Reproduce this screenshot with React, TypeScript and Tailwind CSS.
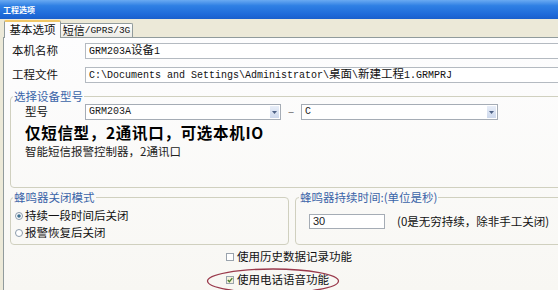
import React from 'react';

const mono = "font-['Liberation_Mono','Noto_Sans_CJK_SC',monospace]";

function Combo({ value, width }: { value: string; width: string }) {
  return (
    <div className={`${width} h-[16px] border border-[#a5acb5] bg-white flex items-stretch`}>
      <span className={`flex-1 pl-[3px] text-[10px] leading-[14px] ${mono} text-[#222]`}>{value}</span>
      <span className="w-[9px] my-[1px] mr-[1px] bg-[linear-gradient(180deg,#e8eef8,#cdd8ec)] flex items-center justify-center">
        <svg width="5" height="3" viewBox="0 0 5 3">
          <path d="M0 0h5L2.5 3z" fill="#4d6185" />
        </svg>
      </span>
    </div>
  );
}

function Radio({ checked }: { checked?: boolean }) {
  return (
    <svg width="8" height="8" viewBox="0 0 8 8" className="shrink-0">
      <circle cx="4" cy="4" r="3.5" fill="#fff" stroke="#8a9aab" />
      {checked && <circle cx="4" cy="4" r="1.8" fill="#3c6f8f" />}
    </svg>
  );
}

function Check({ checked }: { checked?: boolean }) {
  return (
    <svg width="8" height="8" viewBox="0 0 8 8" className="shrink-0">
      <rect x="0.5" y="0.5" width="7" height="7" fill={checked ? '#f3f1dc' : '#fff'} stroke="#9aa3ad" />
      {checked && <path d="M1.8 4l1.6 1.7L6.3 2.2" fill="none" stroke="#4a7a2c" strokeWidth="1.3" />}
    </svg>
  );
}

export default function App() {
  return (
    <div className="w-[558px] h-[290px] overflow-hidden bg-[#ece9d8] flex flex-col font-['Noto_Sans_CJK_SC',sans-serif] text-[11.5px] text-[#111]">
      {/* title bar */}
      <div className="h-[19px] shrink-0 bg-[linear-gradient(180deg,#6aaaf2_0%,#2f80e4_30%,#1f6bda_75%,#1a5fcc_100%)] flex items-center pl-[3px]">
        <span className="text-[8px] font-bold text-white leading-none">工程选项</span>
      </div>

      {/* tabs */}
      <div className="h-[18px] shrink-0 flex items-end pl-[4px]">
        <div className="relative z-10 -mb-px h-[18px] w-[57px] bg-[#fcfcfe] border border-b-0 border-[#919b9c] border-t-2 border-t-[#f1c766] rounded-t-[2px] flex items-center justify-center leading-none">
          基本选项
        </div>
        <div className="h-[14px] w-[72px] bg-[linear-gradient(180deg,#fefefe,#ecebe5)] border border-b-0 border-l-0 border-[#919b9c] rounded-tr-[2px] flex items-center justify-center leading-none whitespace-nowrap">
          <span className="text-[11px]">短信</span>
          <span className={`text-[9.5px] ${mono}`}>/GPRS/3G</span>
        </div>
      </div>

      {/* tab page */}
      <div className="flex-1 ml-[3px] border-l border-t border-[#919b9c] bg-[linear-gradient(180deg,#fdfdfe,#f8f7f3)] flex flex-col">
        <div className="mt-[5px] h-[16px] flex items-center pl-[8px] -mr-[10px]">
          <span className="w-[73px] leading-none">本机名称</span>
          <div className={`flex-1 h-[16px] border border-[#b4bac1] bg-white pl-[3px] text-[10px] leading-[14px] ${mono}`}>
            GRM203A<span className="text-[11.5px]">设备</span>1
          </div>
        </div>
        <div className="mt-[8px] h-[16px] flex items-center pl-[8px] -mr-[10px]">
          <span className="w-[73px] leading-none">工程文件</span>
          <div className={`flex-1 h-[16px] border border-[#b4bac1] bg-white pl-[3px] text-[10px] leading-[14px] whitespace-nowrap ${mono}`}>
            C:\Documents and Settings\Administrator\<span className="text-[11.5px]">桌面</span>\<span className="text-[11.5px]">新建工程</span>1.GRMPRJ
          </div>
        </div>

        {/* device type group */}
        <fieldset className="mt-[8px] ml-[6px] -mr-[10px] h-[97px] border border-[#d0d0bf] rounded-[4px] px-0">
          <legend className="ml-[2px] px-[1px] text-[#3a64a8] leading-[11px]">选择设备型号</legend>
          <div className="flex items-center pl-[14px] mt-[2px]">
            <span className="w-[60px] leading-none">型号</span>
            <Combo value="GRM203A" width="w-[196px]" />
            <span className="w-[20px] text-center text-[#666] leading-none">–</span>
            <Combo value="C" width="w-[197px]" />
          </div>
          <div className="pl-[14px] mt-[4px] text-[15.5px] font-bold leading-[17px] text-black tracking-[0.7px]">仅短信型，2通讯口，可选本机IO</div>
          <div className="pl-[14px] mt-[4px] leading-[13px] text-[#222]">智能短信报警控制器，2通讯口</div>
        </fieldset>

        <div className="mt-[3px] flex ml-[6px] -mr-[10px] gap-[6px]">
          <fieldset className="w-[279px] h-[54px] border border-[#d0d0bf] rounded-[4px]">
            <legend className="ml-[2px] px-[1px] text-[#3a64a8] leading-[12px]">蜂鸣器关闭模式</legend>
            <div className="pt-[4px] pl-[4px] flex flex-col">
              <label className="h-[17px] flex items-center gap-[2px] leading-none">
                <Radio checked />
                持续一段时间后关闭
              </label>
              <label className="h-[17px] flex items-center gap-[2px] leading-none">
                <Radio />
                报警恢复后关闭
              </label>
            </div>
          </fieldset>
          <fieldset className="flex-1 h-[54px] border border-[#d0d0bf] rounded-[4px]">
            <legend className="ml-[3px] px-[1px] text-[#3a64a8] leading-[12px]">蜂鸣器持续时间:(单位是秒)</legend>
            <div className="mt-[11px] pl-[13px] flex items-center">
              <div className="w-[76px] h-[15px] border border-[#a5acb5] bg-white pl-[3px] text-[11px] leading-[13px] font-['Liberation_Sans',sans-serif] text-[#222]">30</div>
              <span className="ml-[12px] leading-none">(0是无穷持续，除非手工关闭)</span>
            </div>
          </fieldset>
        </div>

        <div className="mt-[2px] pl-[222px] flex flex-col">
          <label className="h-[20px] flex items-center gap-[3px] leading-none">
            <Check />
            使用历史数据记录功能
          </label>
          <label className="relative mt-[3px] h-[20px] flex items-center gap-[3px] leading-none">
            <Check checked />
            使用电话语音功能
            <svg className="absolute left-[-20px] top-[-3px]" width="134" height="28" viewBox="0 0 134 28">
              <ellipse cx="67" cy="14" rx="65.5" ry="12" fill="none" stroke="#9a3a4c" strokeWidth="1.3" />
            </svg>
          </label>
        </div>
      </div>
    </div>
  );
}
